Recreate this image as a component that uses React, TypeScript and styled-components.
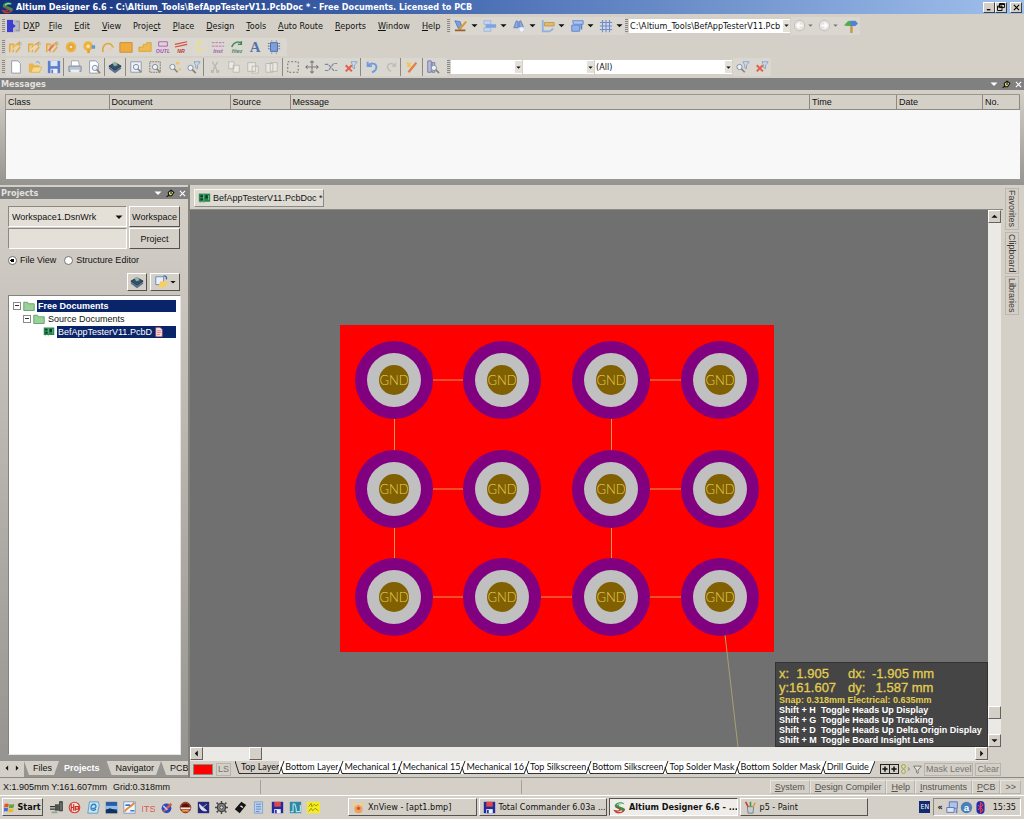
import React, { ReactNode } from 'react';
import styled, { createGlobalStyle } from 'styled-components';

const FACE = '#d4d0c8';
const UI = '"DejaVu Sans Condensed", "DejaVu Sans", sans-serif';
const SANS = '"Liberation Sans", Arial, sans-serif';
const NARROW = 'Lato, "Liberation Sans", sans-serif';

const Global = createGlobalStyle`
  * { box-sizing: border-box; }
  body { margin: 0; background: ${FACE}; color: #111; font: 9px/12px ${SANS}; }
  button, input, select { font: inherit; color: inherit; border-radius: 0; margin: 0; }
  a { color: inherit; text-decoration: none; }
  svg { display: block; flex: none; }
`;

/* ---------- icons (16 x 16 grid) ---------- */
const page = <path d="M3 1h7l3 3v11H3z" fill="#fff" stroke="#8a93b0" />;
const lens = (x: number, y: number) => (
  <g transform={`translate(${x} ${y})`}>
    <circle cx="4" cy="4" r="3" fill="#eaf2fa" stroke="#7f8894" />
    <path d="M6 6l4 4" stroke="#8c8478" strokeWidth="2" />
  </g>
);
const funnel = <path d="M8 2h7l-3 4v4l-2-1V6z" fill="#c8dcf4" stroke="#7890b4" strokeWidth=".8" />;
const redX = <path d="M2 6l7 7M9 6l-7 7" stroke="#e0614e" strokeWidth="2.4" />;
const bars = (c: string) => (
  <>
    <path d="M2 14V5h5M6 14V8l7-5v4M9 14l5-6" stroke="#e9a93c" strokeWidth="1.8" fill="none" />
    <path d="M4 12l6-6" stroke={c} strokeWidth="2" />
    <path d="M12 3h3v3" stroke="#a9b4c8" fill="none" />
  </>
);
const floppy = (a: string, b: string) => (
  <>
    <path d="M1 1h14v14H1z" fill={a} />
    <path d="M4 1h8v6H4z" fill={b} />
    <path d="M4 10h8v5H4z" fill="#eef" />
    <path d="M5 11h2v4H5z" fill={a} />
  </>
);
const tinyText = (top: ReactNode, t: string, c: string) => (
  <>
    {top}
    <text x="8" y="15" textAnchor="middle" fontSize="6" fontStyle="italic" fontWeight="700" fontFamily="Liberation Sans" fill={c}>{t}</text>
  </>
);
const board = (
  <>
    <path d="M1 2h14v10H1z" fill="#27864f" />
    <path d="M3 4h3v2H3zM3 8h4v2H3zM9 4h3v4H9z" fill="#0c3b2c" />
    <path d="M2 13h2M6 13h2M13 4v6M7 3v8" stroke="#83c08d" />
  </>
);
const chip = (
  <>
    <path d="M8 3l7 4-7 5-7-5z" fill="#34506c" stroke="#1e2c3c" />
    <path d="M1 8v2l7 5 7-5V8l-7 4z" fill="#56718b" />
    <path d="M5 3l4-1 2 4-4 1z" fill="#8eb6a4" />
  </>
);
const altium = (
  <>
    <path d="M2 6C3 1 12 0 14 4c-4-1-7 0-7 2l7 3c1 2 0 3-1 4L3 8z" fill="#2f9a4b" />
    <path d="M14 10c-1 5-10 6-12 2 4 1 7 0 7-2L4 7" stroke="#c33b30" strokeWidth="1.6" fill="none" />
    <path d="M5 5c2-2 5-2 7-1" stroke="#fff" fill="none" />
  </>
);

const ICONS: Record<string, ReactNode> = {
  altium,
  board,
  chip,
  dxp: (<><path d="M0 1h7v14H0z" fill="#3d3fd0" /><path d="M7 1h8v14H7z" fill="#b9b9c4" /><path d="M5 4l5 4-5 4z" fill="#3d3fd0" /><path d="M10 3h4v10h-4" fill="none" stroke="#8d8d9c" /></>),
  ruler: (<><path d="M1 2l6 1 2 6-4 2z" fill="#7a9fe0" stroke="#4a68a8" strokeWidth=".8" /><path d="M6 12l8-9" stroke="#dd9a34" strokeWidth="2.4" /><path d="M1 13h12" stroke="#94622a" strokeWidth="2" /></>),
  align: (<><path d="M1 2h8v4H1zM1 10h8v4H1z" fill="#c3d6f4" stroke="#87a4d4" strokeWidth=".7" /><path d="M3 6h12v4H3z" fill="#7ea2e2" /></>),
  find: (<><path d="M2 10l3-8 2 1v7zM8 3l2-1 3 7H8z" fill="#8caae0" stroke="#5b7cc4" /><circle cx="11" cy="12" r="3" fill="#eff4fc" stroke="#c6cede" /></>),
  dim: (<><path d="M2 1v13h8" stroke="#8db0e0" strokeWidth="2" fill="none" /><path d="M4 4h11v4H4z" fill="#e2ba68" stroke="#a88442" strokeWidth=".7" /><path d="M10 14l4-3" stroke="#8db0e0" strokeWidth="2" /></>),
  room: (<><path d="M2 7h9v7H2z" fill="#8fb2ea" stroke="#5a82c8" /><path d="M3 2h12v4H4z" fill="#aac6f2" stroke="#5a82c8" /><path d="M13 6v6" stroke="#5a82c8" strokeWidth="2" /></>),
  grid: <path d="M4 1v14M8 1v14M12 1v14M1 4h14M1 8h14M1 12h14" stroke="#6a8dd2" strokeWidth="1.2" />,
  navBack: (<><circle cx="8" cy="8" r="6.5" fill="#e6e4e0" stroke="#bab7b1" /><path d="M12 8H5M8 5L5 8l3 3" stroke="#fff" strokeWidth="2" fill="none" /></>),
  navNext: (<><circle cx="8" cy="8" r="6.5" fill="#e6e4e0" stroke="#bab7b1" /><path d="M4 8h7M8 5l3 3-3 3" stroke="#fff" strokeWidth="2" fill="none" /></>),
  home: (<><path d="M7 6h3v10H7z" fill="#c79b55" /><path d="M0 7l5-5 4 1v5H3z" fill="#58aa4e" /><path d="M7 2h6l3 3-3 3H8z" fill="#4c86d0" /></>),
  route1: bars('#f7cf74'),
  route2: bars('#f2dca0'),
  route3: bars('#e0705c'),
  pad: (<><circle cx="8" cy="8" r="6" fill="#f0b23e" /><circle cx="8" cy="8" r="2.4" fill="#fbe6b4" stroke="#c8862a" /></>),
  via: (<><circle cx="7" cy="7" r="5.5" fill="#f0b23e" /><circle cx="7" cy="7" r="2" fill="#fae3ac" /><path d="M6 11h3v4H6z" fill="#e0a030" /><path d="M11 6h4v4h-4z" fill="#5b9bd8" /></>),
  arc: (<><path d="M2 14C1 4 11 0 14 9" stroke="#e3a63c" strokeWidth="1.8" fill="none" /><path d="M9 12l4-4" stroke="#f2cf8c" strokeWidth="2" /></>),
  fill: <path d="M1 3h14v11H1z" fill="#f0ab3c" stroke="#c58a3a" />,
  region: <path d="M1 13V8h5V5h4V3h5v10z" fill="#eebb50" stroke="#d8a23a" />,
  outl: tinyText(<path d="M3 2h10v5H3z" fill="none" stroke="#b54fc0" />, 'OUTL', '#a54fc0'),
  nr: tinyText(<path d="M1 5l14-3M1 8l14-3" stroke="#d84a42" strokeWidth="1.4" />, 'NR', '#b83a30'),
  coord: <path d="M12 4C8 0 3 4 4 8s5 6 9 3" stroke="#ecdf88" strokeWidth="2" fill="none" />,
  inst: tinyText(<path d="M1 3h14M1 7h14" stroke="#bc6ab4" strokeDasharray="3 1" />, 'Inst', '#a35aa8'),
  wiz: tinyText(<path d="M2 8c2-6 8-7 11-4M13 1v4H9" stroke="#3f8c58" strokeWidth="1.6" fill="none" />, 'fitez', '#4c8468'),
  text: <text x="8" y="14" textAnchor="middle" fontSize="17" fontWeight="700" fontFamily="Liberation Serif" fill="#5573ac">A</text>,
  component: (<><path d="M4 3h8v10H4z" fill="#7e9fd8" stroke="#4466a8" /><path d="M1 4h2M1 7h2M1 10h2M13 4h2M13 7h2M13 10h2M5 1h1M10 1h1M5 15h1M10 15h1" stroke="#6b7ba0" strokeWidth="1.4" /></>),
  fresh: page,
  open: (<><path d="M1 14V4h5l1 2h6v8z" fill="#e8b64c" /><path d="M3 14l3-6h10l-3 6z" fill="#fbd986" stroke="#d0a03c" strokeWidth=".6" /><path d="M9 3c2-2 4-1 4 1" stroke="#6b8cc4" fill="none" /></>),
  save: floppy('#5d7ec8', '#d8e4f8'),
  print: (<><path d="M4 1h8l1 6H4z" fill="#fff" stroke="#8c98a8" strokeWidth=".8" /><path d="M1 7h14v6H1z" fill="#b8c2d0" stroke="#6e7a8c" strokeWidth=".8" /><path d="M3 11h10v3H3z" fill="#e9eef5" /></>),
  preview: (<>{page}{lens(5, 5)}</>),
  zoomDoc: (<><path d="M2 2h12v12H2z" fill="#e8eff8" stroke="#8a93a8" />{lens(4, 4)}</>),
  zoomSel: (<><path d="M2 2h12v12H2z" fill="none" stroke="#70706c" strokeDasharray="2 1" />{lens(4, 4)}</>),
  zoomPick: (<>{lens(1, 4)}<path d="M9 2h4v3H9zM12 9h3v3h-3z" fill="#edc46c" /></>),
  zoomFilter: (<>{lens(0, 5)}{funnel}</>),
  cut: <path d="M5 2l5 9M11 2L6 11M4 12h2v2H4zM10 12h2v2h-2z" stroke="#b8b5ae" strokeWidth="1.4" fill="none" />,
  copy: <path d="M2 2h6v8H2zM7 6h7v8H7z" fill="#eceae5" stroke="#b8b5ae" />,
  paste: <path d="M2 3h9v10H2zM7 7h7v8H7z" fill="#e9e7e2" stroke="#b8b5ae" />,
  stamp: <path d="M1 4h8v10H1zM6 3h8v10H6z" fill="#e9e7e2" stroke="#b8b5ae" />,
  select: <path d="M2 2h12v12H2z" fill="none" stroke="#62625e" strokeDasharray="2 2" />,
  move: <path d="M8 1v14M1 8h14M6 3l2-2 2 2M6 13l2 2 2-2M3 6L1 8l2 2M13 6l2 2-2 2" stroke="#7a7a7c" fill="none" strokeWidth="1.2" />,
  deselect: <path d="M1 5h4l6 7h4M1 12h4l6-8h4" stroke="#7e889c" fill="none" strokeWidth="1.4" strokeDasharray="4 1" />,
  clear: (<>{redX}{funnel}</>),
  undo: <path d="M3 2v5h5M3 7c4-5 10-3 10 1 0 3-2 5-5 6" stroke="#6f9be0" strokeWidth="2.2" fill="none" />,
  redo: <path d="M13 3v4H9M13 7C9 2 4 4 4 8c0 3 2 4 4 5" stroke="#bfbcb6" strokeWidth="1.6" fill="none" />,
  wand: (<><path d="M4 14l9-11" stroke="#e47c44" strokeWidth="2.6" /><path d="M2 3l5 5M3 8l3-5" stroke="#f0c848" strokeWidth="2" /></>),
  browse: (<><path d="M2 1h4v13H2zM7 3h3v11H7z" fill="#b7bce2" stroke="#70769c" />{lens(5, 5)}</>),
  zoomF: (<>{lens(0, 4)}{funnel}</>),
  folderBtn: (<><path d="M2 2h9v9H2z" fill="#e8f0fc" stroke="#5c80b8" /><path d="M5 14l2-7h9l-3 7z" fill="#f6cf62" /><path d="M11 1c3 0 4 2 3 4" stroke="#3e68b0" strokeWidth="1.6" fill="none" /></>),
  folder: <path d="M1 14V3h5l1 2h8v9z" fill="#9cd09a" stroke="#4e9058" />,
  docRed: (<><path d="M3 1h7l3 3v11H3z" fill="#fbdede" stroke="#d87878" /><path d="M5 6h6M5 9h6M5 12h4" stroke="#d04848" /></>),
  windows: (<><path d="M1 3c2-1 4-1 6 0L6 8C4 7 3 7 0 8z" fill="#e5532c" /><path d="M8 3c2 1 4 1 7 0l-1 5c-3 1-5 1-7 0z" fill="#58a83c" /><path d="M0 9c2-1 4-1 6 0l-1 5c-2-1-3-1-5 0z" fill="#3c6fd8" /><path d="M7 9c2 1 4 1 7 0l-1 5c-3 1-5 1-7 0z" fill="#f0b828" /></>),
  plug: (<><path d="M6 4h5v8H6z" fill="#4b5350" /><path d="M0 7h6M0 10h6M12 1h3v11h-3z" stroke="#2e3432" strokeWidth="1.4" fill="#888" /><path d="M2 14h7" stroke="#88a090" strokeWidth="2" /></>),
  hp: (<><circle cx="8" cy="8" r="6.5" fill="#f3dcd4" stroke="#cf4436" strokeWidth="1.4" /><path d="M4 4v8M7 4v8M4 8h3M9 12V7h4v3H9" stroke="#cf2c24" fill="none" strokeWidth="1.4" /></>),
  mail: (<><path d="M3 1h11l1 4-2 10H1z" fill="#c6e4f4" stroke="#4a94c4" /><path d="M11 10c-4 3-7 1-6-3s6-4 6 0c0 2-3 2-5 2" fill="none" stroke="#3180bc" strokeWidth="1.6" /></>),
  sea: (<><path d="M1 1h14v14H1z" fill="#2c5ca8" /><path d="M1 6h14v4H1z" fill="#8cc0e8" /><path d="M1 11l5-2 9 3v3H1z" fill="#14305c" /></>),
  orbit: (<><path d="M1 1h14v14H1z" fill="#f4f6fa" stroke="#6a90c8" /><path d="M2 13C4 8 9 9 14 2" stroke="#e88c2c" strokeWidth="2.4" fill="none" /><path d="M3 5h6M9 12h5" stroke="#3d78c8" strokeWidth="2" /></>),
  its: <text x="8" y="13" textAnchor="middle" fontSize="12" fontFamily="Liberation Sans" fill="#d85c50">ITS</text>,
  rocket: (<><circle cx="8" cy="9" r="6" fill="#2c48c0" /><path d="M3 13L13 2l2 3-9 8z" fill="#e05c38" /><path d="M4 6l5 5" stroke="#a8ccf4" strokeWidth="2" /></>),
  dome: (<><circle cx="8" cy="8" r="6.5" fill="#b8402c" stroke="#7c2418" /><path d="M3 8a5 5 0 0110 0z" fill="#4c1810" /><path d="M2 9h12" stroke="#f6ecd8" strokeWidth="2" /><path d="M4 12h8" stroke="#e8a040" strokeWidth="2" /></>),
  dish: (<><path d="M1 1h14v14H1z" fill="#25297c" /><path d="M3 4c0 6 4 9 9 8zM7 8l5-4" fill="#dce0e8" stroke="#dce0e8" /></>),
  gear: (<><circle cx="8" cy="8" r="5" fill="#888" stroke="#3c3c3c" strokeWidth="1.6" /><circle cx="8" cy="8" r="2" fill="#ddd" stroke="#333" /><path d="M8 0v3M8 13v3M0 8h3M13 8h3M2 2l2 2M12 12l2 2M14 2l-2 2M2 14l2-2" stroke="#444" strokeWidth="1.8" /></>),
  tag: (<><path d="M1 10L9 1l6 4-8 10z" fill="#141414" /><path d="M8 6l3 2" stroke="#eee" strokeWidth="1.6" /></>),
  notes: (<><path d="M3 1h10v14H3z" fill="#b8cff0" stroke="#7e9ccc" /><path d="M5 4h6M5 7h6M5 10h6M5 13h4" stroke="#587cb8" /></>),
  tc: floppy('#202c9c', '#e04848'),
  wave: (<><path d="M1 1h14v14H1z" fill="#2c88a4" /><path d="M2 13h3V4c3-3 4 6 4 9h5V5" stroke="#b4e4ec" fill="none" strokeWidth="1.4" /></>),
  paper: (<><path d="M0 1h16v14H0z" fill="#f4ec20" /><path d="M2 7l3-4 1 4 3-3 2 2 3-2M2 13l3-4 2 3 3-3 4 3" stroke="#8c7c10" fill="none" /></>),
  xn: (<><circle cx="8" cy="10" r="5" fill="#eca258" /><circle cx="3" cy="4" r="2.6" fill="#f4cc90" /><circle cx="12" cy="4" r="2.6" fill="#f4cc90" /><circle cx="8" cy="9" r="2" fill="#d84c30" /></>),
  paint: (<><path d="M4 7h8l-1 8H5z" fill="#c8ccd0" stroke="#707478" /><path d="M5 7L2 1" stroke="#cf3c30" strokeWidth="2" /><path d="M8 7V1" stroke="#4a9a44" strokeWidth="2" /><path d="M11 7l3-5" stroke="#e0a030" strokeWidth="2" /></>),
  net: (<><path d="M4 1h10v8H4z" fill="#a8c4f0" stroke="#5068a8" /><path d="M1 8h9v6H1z" fill="#d8e4f8" stroke="#5068a8" /><path d="M13 10v5" stroke="#7084b4" strokeWidth="2" /></>),
  avast: (<><circle cx="8" cy="8" r="7" fill="#4a80b8" /><text x="8" y="12" textAnchor="middle" fontSize="12" fontWeight="700" fontFamily="Liberation Sans" fill="#fff">a</text></>),
  bluetooth: (<><rect x="3" y="0" width="10" height="16" rx="5" fill="#1c2cb4" /><path d="M5 5l6 6-3 3V2l3 3-6 6" stroke="#e03848" strokeWidth="1.4" fill="none" /></>),
  pin: (<><path d="M4 6l5-4 5 4-4 6H5z" fill="#e8e070" stroke="#111" strokeWidth="1.8" /><path d="M1 14l5-4M9 2v7" stroke="#111" strokeWidth="2" /></>),
  down: <path d="M1 5h14l-7 7z" fill="currentColor" />,
  left: <path d="M11 1v14L4 8z" fill="currentColor" />,
  right: <path d="M5 1v14l7-7z" fill="currentColor" />,
  up: <path d="M1 11h14L8 4z" fill="currentColor" />,
  close: <path d="M2 2l12 12M14 2L2 14" stroke="currentColor" strokeWidth="2.6" />,
  min: <path d="M2 13h8" stroke="currentColor" strokeWidth="3" />,
  restore: <path d="M5 1h10v8H5zM5 3h10M1 6h9v9H1zM1 8h9" stroke="currentColor" strokeWidth="1.8" fill={FACE} />,
  dots: (<><circle cx="4" cy="4" r="3" fill="#e8e48c" stroke="#7c7c40" /><circle cx="4" cy="12" r="3" fill="#e8e48c" stroke="#7c7c40" /><path d="M11 4v8l4-4z" fill="#a5a199" /></>),
  filter: <path d="M1 2h14L9 9v6l-3-2V9z" fill="#e4e8e4" stroke="#606860" strokeWidth="1.4" />,
  plus: <path d="M8 1v14M1 8h14" stroke="currentColor" strokeWidth="4" />,
};

const Icon = ({ name, size = 14 }: { name: string; size?: number }) => (
  <svg width={size} height={size} viewBox="0 0 16 16" aria-hidden="true">{ICONS[name]}</svg>
);

/* ---------- window frame ---------- */
const Window = styled.div`
  min-height: 100vh;
  display: flex;
  flex-direction: column;
  background: ${FACE};
`;
const TitleBar = styled.header`
  height: 14px;
  display: flex;
  align-items: center;
  gap: 2px;
  padding: 0 2px 0 1px;
  background: linear-gradient(90deg, #14307a, #4166ae 40%, #a0c0ec);
  color: #fff;
  font: bold 9px/13px ${UI};
  h1 { flex: 1; min-width: 0; margin: 0; font: inherit; white-space: nowrap; overflow: hidden; }
`;
const CaptionButton = styled.button<{ $apart?: boolean }>`
  width: 12px;
  height: 11px;
  padding: 0;
  margin-left: ${p => (p.$apart ? 1 : -2)}px;
  display: grid;
  place-items: center;
  background: ${FACE};
  color: #000;
  border: 1px solid;
  border-color: #fff #404040 #404040 #fff;
`;
const Bar = styled.div<{ $h: number }>`
  height: ${p => p.$h}px;
  display: flex;
  align-items: center;
  padding-left: 2px;
  font-family: ${UI};
`;
const Grip = styled.span`
  width: 3px;
  height: 14px;
  margin-right: 1px;
  flex: none;
  background: repeating-linear-gradient(#8c8982 0 1px, transparent 1px 2px);
`;
const Menu = styled.nav`
  display: flex;
  align-items: center;
  width: 441px;
`;
const MenuItem = styled.button`
  padding: 0 6px;
  border: 0;
  background: none;
  line-height: 16px;
  white-space: nowrap;
`;
const DxpItem = styled(MenuItem)`
  display: flex;
  align-items: center;
  gap: 2px;
  padding: 0 3px 0 1px;
`;
const Key = styled.span`
  text-decoration: underline;
`;
const ToolStrip = styled.div<{ $w?: number }>`
  display: flex;
  align-items: center;
  justify-content: space-between;
  width: ${p => (p.$w ? `${p.$w}px` : 'auto')};
  height: 18px;
  padding-right: ${p => (p.$w ? 4 : 0)}px;
  background: #dad7d0;
`;
const Tool = styled.button`
  width: 19px;
  min-width: 0;
  flex: 0 1 19px;
  height: 18px;
  padding: 0;
  border: 0;
  background: none;
  display: grid;
  place-items: center;
`;
const DropTool = styled(Tool)`
  width: 29px;
  flex-basis: 29px;
  grid-template-columns: 20px 6px;
`;
const NavTool = styled(DropTool)`
  width: 25px;
  flex-basis: 25px;
  color: #77746e;
  grid-template-columns: 16px 6px;
`;
const Divider = styled.span`
  width: 2px;
  height: 18px;
  flex: none;
  border-left: 1px solid #8c8982;
`;
const Combo = styled.span<{ $w?: number; $tone?: string }>`
  display: flex;
  align-items: center;
  width: ${p => (p.$w ? `${p.$w}px` : 'auto')};
  height: 14px;
  margin-right: 1px;
  background: ${p => p.$tone ?? '#fff'};
  select {
    flex: 1;
    min-width: 0;
    height: 14px;
    padding: 0 1px;
    border: 0;
    appearance: none;
    background: transparent;
    text-overflow: clip;
  }
`;
const Arrow = styled.span`
  width: 7px;
  height: 12px;
  display: grid;
  place-items: center;
  background: #e4e1db;
`;

/* ---------- docked panels ---------- */
const PanelTitle = styled.div`
  height: 12px;
  display: flex;
  align-items: center;
  gap: 4px;
  padding: 0 2px;
  background: #808080;
  color: #e4e1dc;
  font: bold 9px/12px ${UI};
  h2 { flex: 1; margin: 0; margin-left: -1px; font: inherit; }
`;
const PanelButton = styled.button`
  padding: 0;
  border: 0;
  background: none;
  color: #fff;
`;
const MessagesBody = styled.div`
  height: 95px;
  padding: 4px 4px 6px 5px;
  background: linear-gradient(${FACE}, #969490);
`;
const MessagesList = styled.div`
  height: 85px;
  background: #f8f8f8;
  border-top: 1px solid #9a978f;
  border-left: 1px solid #9a978f;
`;
const MessagesTable = styled.table`
  width: 100%;
  table-layout: fixed;
  border-collapse: collapse;
  th {
    height: 14px;
    padding: 0 2px;
    text-align: left;
    font-weight: 400;
    line-height: 12px;
    background: ${FACE};
    border-right: 1px solid #8c8982;
    border-bottom: 1px solid #8c8982;
  }
`;
const Col = styled.col<{ $w?: number }>`
  width: ${p => (p.$w ? `${p.$w}px` : 'auto')};
`;
const Workspace = styled.main`
  flex: 1;
  display: flex;
  min-height: 420px;
  border-bottom: 1px solid #8c8982;
`;
const Projects = styled.aside`
  width: 190px;
  flex: none;
  display: flex;
  flex-direction: column;
  padding-top: 2px;
  border-right: 2px solid #85827b;
`;
const ProjectsBody = styled.div`
  flex: 1;
  display: flex;
  flex-direction: column;
  padding: 7px 8px 6px;
  background: linear-gradient(${FACE}, #969490);
`;
const FieldRow = styled.div`
  display: grid;
  grid-template-columns: 1fr 51px;
  gap: 2px;
  height: 21px;
  margin-bottom: 1px;
`;
const BoxedCombo = styled(Combo)`
  height: 21px;
  margin: 0;
  border: 1px solid #8c8982;
  border-right-color: #fff;
  border-bottom-color: #fff;
  ${Arrow} { width: 14px; background: none; }
  select { padding-left: 3px; }
`;
const TextField = styled.input`
  min-width: 0;
  border: 1px solid;
  border-color: #8c8982 #fff #fff #8c8982;
  background: #e4e0d8;
`;
const PushButton = styled.button<{ $w?: number }>`
  width: ${p => (p.$w ? `${p.$w}px` : 'auto')};
  padding: 0;
  display: flex;
  align-items: center;
  justify-content: center;
  gap: 2px;
  background: ${FACE};
  border: 1px solid;
  border-color: #fff #55524d #55524d #fff;
  white-space: nowrap;
`;
const Radios = styled.div`
  display: flex;
  gap: 8px;
  height: 20px;
  align-items: center;
  label { display: flex; align-items: center; gap: 3px; }
  input {
    appearance: none;
    width: 9px;
    height: 9px;
    border-radius: 50%;
    border: 1px solid #77746e;
    background: #fff;
  }
  input:checked { background: radial-gradient(#000 0 1px, #111 2px, #fff 2px); }
`;
const Actions = styled.div`
  display: flex;
  justify-content: flex-end;
  gap: 3px;
  height: 18px;
  margin: 3px 0 4px;
`;
const Tree = styled.ul`
  flex: 1;
  list-style: none;
  margin: 0 -1px 0 0;
  padding: 3px 4px 0 4px;
  background: #fff;
  border: 1px solid;
  border-color: #85827b #e8e5de #e8e5de #85827b;
`;
const TreeRow = styled.li<{ $level: number }>`
  display: flex;
  align-items: center;
  height: 13px;
  padding-left: ${p => p.$level * 10}px;
  gap: 2px;
`;
const TreeLabel = styled.span<{ $on?: boolean; $bold?: boolean }>`
  flex: 1;
  display: flex;
  align-items: center;
  gap: 2px;
  height: 12px;
  padding-left: 1px;
  white-space: nowrap;
  overflow: hidden;
  background: ${p => (p.$on ? '#0a246a' : 'transparent')};
  color: ${p => (p.$on ? '#fff' : '#111')};
  font-weight: ${p => (p.$bold ? 700 : 400)};
`;
const Expander = styled.button`
  width: 8px;
  height: 8px;
  padding: 0;
  border: 1px solid #8a8a8a;
  background: linear-gradient(#333, #333) center / 4px 1px no-repeat #fff;
`;
const PanelTabs = styled.nav`
  height: 16px;
  display: flex;
  align-items: flex-start;
  overflow: hidden;
  background: #969490;
`;
const PanelArrows = styled.span`
  display: flex;
  gap: 4px;
  height: 16px;
  padding: 4px 4px;
  background: ${FACE};
`;
const PanelTab = styled.button<{ $on?: boolean }>`
  flex: none;
  height: 14px;
  padding: 0 7px 0 ${p => (p.$on ? 5 : 9)}px;
  border: 0;
  background: ${p => (p.$on ? 'transparent' : FACE)};
  color: ${p => (p.$on ? '#fff' : '#111')};
  font-weight: ${p => (p.$on ? 700 : 400)};
  clip-path: ${p => (p.$on ? 'none' : 'polygon(0 0, 100% 0, calc(100% - 5px) 100%, 5px 100%)')};
  &:last-child { padding-right: 1px; clip-path: polygon(0 0, 100% 0, 100% 100%, 5px 100%); }
`;

/* ---------- document area ---------- */
const Documents = styled.section`
  flex: 1;
  min-width: 0;
  display: flex;
  flex-direction: column;
`;
const DocTabs = styled.div`
  height: 25px;
  display: flex;
  align-items: flex-end;
  padding: 0 0 2px 4px;
  border-bottom: 1px solid #8c8982;
`;
const DocTab = styled.button`
  height: 18px;
  display: flex;
  align-items: center;
  gap: 2px;
  padding: 0 1px 0 3px;
  background: #dedbd4;
  border: 1px solid;
  border-color: #f8f6f2 #8c8982 #8c8982 #f8f6f2;
  white-space: nowrap;
`;
const CanvasRow = styled.div`
  flex: 1;
  display: flex;
  min-height: 0;
`;
const Canvas = styled.div`
  flex: 1;
  min-width: 0;
  position: relative;
  overflow: hidden;
  background: #707070;
  > svg { width: 100%; height: 100%; }
`;
const Hud = styled.div`
  position: absolute;
  right: 0;
  bottom: 0;
  width: 213px;
  padding: 4px 3px 1px;
  background: #454545;
  border: 1px solid #333;
  color: #fff;
  font: bold 9px/10px ${SANS};
  p { margin: 0; white-space: pre; }
`;
const Readout = styled.div`
  display: grid;
  grid-template-columns: 69px 24px 1fr;
  color: #e2cd50;
  font: 13px/14px ${SANS};
  -webkit-text-stroke: 0.3px #e2cd50;
  white-space: pre;
`;
const Snap = styled.p`
  color: #e2cd50;
`;
const Shortcut = styled.p`
  display: grid;
  grid-template-columns: 42px 1fr;
`;
const Track = styled.div<{ $vertical?: boolean }>`
  display: flex;
  flex: none;
  flex-direction: ${p => (p.$vertical ? 'column' : 'row')};
  ${p => (p.$vertical ? 'width: 13px; margin-right: 2px;' : 'height: 14px; margin-right: 15px;')}
  background: #ebe9e5;
`;
const TrackButton = styled.button`
  width: 13px;
  height: 13px;
  flex: none;
  padding: 0;
  display: grid;
  place-items: center;
  background: ${FACE};
  border: 1px solid;
  border-color: #fff #66635d #66635d #fff;
`;
const TrackSpace = styled.span<{ $grow: number }>`
  flex: ${p => p.$grow} 1 0;
`;
const LayerBar = styled.div`
  height: 16px;
  display: flex;
  align-items: center;
  overflow: hidden;
`;
const Swatch = styled.span`
  width: 20px;
  height: 11px;
  margin: 0 3px;
  flex: none;
  background: #f00;
  border: 1px solid #8c8982;
`;
const FlatButton = styled.button`
  height: 13px;
  padding: 0 1px;
  flex: none;
  border: 1px solid #b8b4ac;
  background: none;
  color: #77746e;
  line-height: 11px;
  white-space: nowrap;
`;
const LayerTabs = styled.nav`
  display: flex;
  align-self: stretch;
  margin-left: 4px;
  font: 9px/13px ${NARROW};
`;
const LayerTab = styled.button<{ $on?: boolean }>`
  height: 13px;
  padding: 0;
  border: 0;
  border-bottom: 1px solid #333;
  background: ${p => (p.$on ? FACE : '#fff')};
  line-height: 12px;
  white-space: nowrap;
`;
const LayerTools = styled.div`
  display: flex;
  align-items: center;
  gap: 2px;
  margin-left: auto;
  padding-right: 2px;
`;
const StepButtons = styled.span`
  display: flex;
  border: 1px solid #222;
  button { width: 8px; height: 8px; padding: 1px; border: 0; background: ${FACE}; }
  button + button { width: 9px; border-left: 1px solid #222; }
`;
const SideTabs = styled.nav`
  width: 21px;
  flex: none;
  display: flex;
  flex-direction: column;
  align-items: flex-start;
  gap: 2px;
  padding: 3px 0 0 2px;
`;
const SideTab = styled.button<{ $h: number }>`
  width: 14px;
  height: ${p => p.$h}px;
  padding: 1px 0;
  writing-mode: vertical-rl;
  text-align: left;
  line-height: 12px;
  border: 1px solid #bcb8b0;
  background: none;
  color: #3c3a36;
`;

/* ---------- status and task bar ---------- */
const Status = styled.footer`
  height: 17px;
  display: flex;
  align-items: center;
  padding: 0 3px;
`;
const StatusCell = styled.span<{ $w: number }>`
  width: ${p => p.$w}px;
  display: flex;
  gap: 6px;
  line-height: 14px;
  height: 14px;
  border-right: 1px solid #a5a199;
`;
const StatusButtons = styled.span`
  display: flex;
  margin-left: auto;
`;
const StatusButton = styled.button`
  height: 14px;
  padding: 0 4px;
  border: 1px solid;
  border-color: #e8e5df #b8b4ac #b8b4ac #e8e5df;
  background: none;
  color: #55524d;
  line-height: 12px;
`;
const TaskBar = styled.footer`
  height: 24px;
  display: flex;
  align-items: flex-start;
  padding: 2px 3px 0 2px;
  border-top: 1px solid #fff;
  font: 9px/12px ${UI};
`;
const StartButton = styled(PushButton)`
  width: 41px;
  height: 18px;
  font-weight: 700;
`;
const QuickLaunch = styled.div`
  display: flex;
  width: 276px;
  margin: 0 25px 0 4px;
`;
const Tasks = styled.div`
  display: flex;
  gap: 2px;
  flex: 0 1 520px;
  min-width: 0;
`;
const Task = styled.button<{ $on?: boolean }>`
  flex: 1 1 0;
  min-width: 0;
  height: 18px;
  display: flex;
  align-items: center;
  gap: 3px;
  padding: 0 3px;
  white-space: nowrap;
  overflow: hidden;
  border: 1px solid;
  border-color: ${p => (p.$on ? '#55524d #fff #fff #55524d' : '#fff #55524d #55524d #fff')};
  background: ${p => (p.$on ? '#efede9' : FACE)};
  font-weight: ${p => (p.$on ? 700 : 400)};
`;
const Language = styled.span`
  margin: 3px 3px 0 auto;
  width: 11px;
  background: #122a70;
  color: #fff;
  font: 7px/12px ${UI};
  text-align: center;
`;
const Tray = styled.div`
  height: 18px;
  display: flex;
  align-items: center;
  gap: 1px;
  padding: 0 4px 0 3px;
  border: 1px solid;
  border-color: #8c8982 #fff #fff #8c8982;
  b { padding-right: 2px; }
  time { padding-left: 5px; }
`;

/* ---------- data ---------- */
const MENUS = ['_File', '_Edit', '_View', 'Proje_ct', '_Place', '_Design', '_Tools', '_Auto Route', '_Reports', '_Window', '_Help'];
const DRAW_TOOLS = ['route1', 'route2', 'route3', 'pad', 'via', 'arc', 'fill', 'region', 'outl', 'nr', 'coord', 'inst', 'wiz', 'text', 'component'];
const MAIN_TOOLS = [
  ['fresh', 'open', 'save'], ['print', 'preview'], ['chip'],
  ['zoomDoc', 'zoomSel', 'zoomPick', 'zoomFilter'], ['cut', 'copy', 'paste', 'stamp'],
  ['select', 'move', 'deselect', 'clear'], ['undo', 'redo'], ['wand'], ['browse'],
];
const DROP_TOOLS = ['ruler', 'align', 'find', 'dim', 'room', 'grid'];
const LAYERS = ['Top Layer', 'Bottom Layer', 'Mechanical 1', 'Mechanical 15', 'Mechanical 16', 'Top Silkscreen', 'Bottom Silkscreen', 'Top Solder Mask', 'Bottom Solder Mask', 'Drill Guide'];
const SHORTCUTS = [['H', 'Toggle Heads Up Display'], ['G', 'Toggle Heads Up Tracking'], ['D', 'Toggle Heads Up Delta Origin Display'], ['M', 'Toggle Board Insight Lens']];
const QUICK = ['plug', 'hp', 'mail', 'sea', 'orbit', 'its', 'rocket', 'dome', 'dish', 'gear', 'tag', 'notes', 'tc', 'wave', 'paper'];
const COLUMNS: [string, number?][] = [['Class', 103], ['Document', 121], ['Source', 60], ['Message'], ['Time', 87], ['Date', 86], ['No.', 37]];
const PAD_X = [204, 312, 421, 530];
const PAD_Y = [170, 279, 387];

const keyed = (label: string) => {
  const i = label.indexOf('_');
  return i < 0 ? label : <span>{label.slice(0, i)}<Key>{label[i + 1]}</Key>{label.slice(i + 2)}</span>;
};

const PanelControls = () => (
  <>
    <PanelButton aria-label="Menu"><Icon name="down" size={8} /></PanelButton>
    <PanelButton aria-label="Pin"><Icon name="pin" size={9} /></PanelButton>
    <PanelButton aria-label="Close"><Icon name="close" size={7} /></PanelButton>
  </>
);

const ToolCombo = ({ label, value, w }: { label: string; value: string; w: number }) => (
  <Combo $w={w}>
    <select aria-label={label}><option>{value}</option></select>
    <Arrow><Icon name="down" size={5} /></Arrow>
  </Combo>
);

const Slash = ({ first, last }: { first?: boolean; last?: boolean }) => (
  <svg width="6" height="13" viewBox="0 0 6 13" aria-hidden="true">
    <path d={last ? 'M0 0h6L1 13H0z' : 'M0 0h6v13H0z'} fill={first ? FACE : '#fff'} />
    <path d={first ? 'M0 0l4 12.5h2' : last ? 'M0 12.5h1L6 0' : 'M0 13L5 0M2 6l2 6.5h2'} stroke="#222" fill="none" />
  </svg>
);

const BoardDrawing = () => (
  <svg viewBox="0 0 798 537">
    <path d="M150 115h434v327H150z" fill="#f00" />
    <g stroke="#dd9a50" strokeWidth="1">
      {PAD_Y.map(y => <path key={y} d={`M204 ${y}H312M421 ${y}H530`} />)}
      <path d="M312 387H421M204.5 170V387M421.5 170V387" />
    </g>
    <path d="M535 425L548 537" stroke="#a8a070" strokeWidth="1" />
    {PAD_Y.map(y => PAD_X.map(x => (
      <g key={`${x}-${y}`} transform={`translate(${x} ${y})`}>
        <circle r="39" fill="#800080" />
        <circle r="27" fill="#c0c0c0" />
        <circle r="15" fill="#806000" />
        <text x="0" y="5" textAnchor="middle" fontFamily="Lato, Liberation Sans, sans-serif" fontWeight="300" fontSize="13" fill="#e6cc5a">GND</text>
      </g>
    )))}
  </svg>
);

export default function App() {
  return (
    <Window>
      <Global />
      <TitleBar>
        <Icon name="altium" size={13} />
        <h1>Altium Designer 6.6 - C:\Altium_Tools\BefAppTesterV11.PcbDoc * - Free Documents. Licensed to PCB</h1>
        <CaptionButton aria-label="Minimize"><Icon name="min" size={7} /></CaptionButton>
        <CaptionButton aria-label="Restore"><Icon name="restore" size={8} /></CaptionButton>
        <CaptionButton aria-label="Close" $apart><Icon name="close" size={7} /></CaptionButton>
      </TitleBar>

      <Bar $h={23}>
        <Grip />
        <Menu>
          <DxpItem><Icon name="dxp" />{keyed('D_XP')}</DxpItem>
          {MENUS.map(m => <MenuItem key={m}>{keyed(m)}</MenuItem>)}
        </Menu>
        <Grip />
        <ToolStrip>
          {DROP_TOOLS.map(t => <DropTool key={t} aria-label={t}><Icon name={t} /><Icon name="down" size={7} /></DropTool>)}
        </ToolStrip>
        <Grip />
        <ToolCombo label="Document path" value="C:\Altium_Tools\BefAppTesterV11.Pcb" w={161} />
        <ToolStrip>
          <NavTool aria-label="Back"><Icon name="navBack" size={13} /><Icon name="down" size={5} /></NavTool>
          <NavTool aria-label="Forward"><Icon name="navNext" size={13} /><Icon name="down" size={5} /></NavTool>
          <Tool aria-label="Home"><Icon name="home" /></Tool>
        </ToolStrip>
      </Bar>
      <Bar $h={19}>
        <Grip />
        <ToolStrip $w={281}>
          {DRAW_TOOLS.map(t => <Tool key={t} aria-label={t}><Icon name={t} /></Tool>)}
        </ToolStrip>
      </Bar>
      <Bar $h={22}>
        <Grip />
        <ToolStrip $w={441}>
          {MAIN_TOOLS.map((group, i) => (
            <React.Fragment key={i}>
              {i > 0 && <Divider />}
              {group.map(t => <Tool key={t} aria-label={t}><Icon name={t} /></Tool>)}
            </React.Fragment>
          ))}
        </ToolStrip>
        <Grip />
        <ToolCombo label="Net" value="" w={71} />
        <ToolCombo label="Component" value="" w={71} />
        <ToolCombo label="Filter" value="(All)" w={137} />
        <ToolStrip>
          <Tool aria-label="Apply filter"><Icon name="zoomF" /></Tool>
          <Tool aria-label="Clear filter"><Icon name="clear" /></Tool>
        </ToolStrip>
      </Bar>

      <section>
        <PanelTitle><h2>Messages</h2><PanelControls /></PanelTitle>
        <MessagesBody>
          <MessagesList>
            <MessagesTable>
              <colgroup>{COLUMNS.map(([n, w]) => <Col key={n} $w={w} />)}</colgroup>
              <thead><tr>{COLUMNS.map(([n]) => <th key={n} scope="col">{n}</th>)}</tr></thead>
            </MessagesTable>
          </MessagesList>
        </MessagesBody>
      </section>

      <Workspace>
        <Projects>
          <PanelTitle><h2>Projects</h2><PanelControls /></PanelTitle>
          <ProjectsBody>
            <FieldRow>
              <BoxedCombo $tone="#e4e0d8">
                <select aria-label="Workspace file"><option>Workspace1.DsnWrk</option></select>
                <Arrow><Icon name="down" size={8} /></Arrow>
              </BoxedCombo>
              <PushButton>Workspace</PushButton>
            </FieldRow>
            <FieldRow>
              <TextField aria-label="Project file" />
              <PushButton>Project</PushButton>
            </FieldRow>
            <Radios>
              <label><input type="radio" name="view" defaultChecked />File View</label>
              <label><input type="radio" name="view" />Structure Editor</label>
            </Radios>
            <Actions>
              <PushButton $w={20} aria-label="Compile"><Icon name="chip" /></PushButton>
              <PushButton $w={30} aria-label="Options"><Icon name="folderBtn" /><Icon name="down" size={6} /></PushButton>
            </Actions>
            <Tree>
              <TreeRow $level={0}>
                <Expander aria-label="Collapse" /><Icon name="folder" size={12} />
                <TreeLabel $on $bold>Free Documents</TreeLabel>
              </TreeRow>
              <TreeRow $level={1}>
                <Expander aria-label="Collapse" /><Icon name="folder" size={12} />
                <TreeLabel>Source Documents</TreeLabel>
              </TreeRow>
              <TreeRow $level={3}>
                <Icon name="board" size={12} />
                <TreeLabel $on>BefAppTesterV11.PcbD <Icon name="docRed" size={10} /></TreeLabel>
              </TreeRow>
            </Tree>
          </ProjectsBody>
          <PanelTabs>
            <PanelArrows><Icon name="left" size={6} /><Icon name="right" size={6} /></PanelArrows>
            <PanelTab>Files</PanelTab>
            <PanelTab $on>Projects</PanelTab>
            <PanelTab>Navigator</PanelTab>
            <PanelTab>PCB</PanelTab>
          </PanelTabs>
        </Projects>

        <Documents>
          <DocTabs>
            <DocTab><Icon name="board" size={13} />BefAppTesterV11.PcbDoc *</DocTab>
          </DocTabs>
          <CanvasRow>
            <Canvas>
              <BoardDrawing />
              <Hud>
                <Readout><span>x:  1.905</span><span>dx:</span><span>-1.905 mm</span></Readout>
                <Readout><span>y:161.607</span><span>dy:</span><span> 1.587 mm</span></Readout>
                <Snap>Snap: 0.318mm Electrical: 0.635mm</Snap>
                {SHORTCUTS.map(([k, t]) => <Shortcut key={k}><span>Shift + {k}</span><span>{t}</span></Shortcut>)}
              </Hud>
            </Canvas>
            <Track $vertical>
              <TrackButton aria-label="Scroll up"><Icon name="up" size={7} /></TrackButton>
              <TrackSpace $grow={97} />
              <TrackButton aria-label="Vertical thumb" />
              <TrackSpace $grow={3} />
              <TrackButton aria-label="Scroll down"><Icon name="down" size={7} /></TrackButton>
            </Track>
          </CanvasRow>
          <Track>
            <TrackButton aria-label="Scroll left"><Icon name="left" size={7} /></TrackButton>
            <TrackSpace $grow={6} />
            <TrackButton aria-label="Horizontal thumb" />
            <TrackSpace $grow={94} />
            <TrackButton aria-label="Scroll right"><Icon name="right" size={7} /></TrackButton>
          </Track>
          <LayerBar>
            <Swatch />
            <FlatButton>LS</FlatButton>
            <LayerTabs>
              <Slash first />
              {LAYERS.map((l, i) => (
                <React.Fragment key={l}>
                  {i > 0 && <Slash />}
                  <LayerTab $on={i === 0}>{l}</LayerTab>
                </React.Fragment>
              ))}
              <Slash last />
            </LayerTabs>
            <LayerTools>
              <StepButtons>
                <button aria-label="Previous layer"><Icon name="plus" size={6} /></button>
                <button aria-label="Next layer"><Icon name="plus" size={6} /></button>
              </StepButtons>
              <Icon name="dots" size={10} />
              <Icon name="filter" size={9} />
              <FlatButton>Mask Level</FlatButton>
              <FlatButton>Clear</FlatButton>
            </LayerTools>
          </LayerBar>
        </Documents>

        <SideTabs>
          <SideTab $h={42}>Favorites</SideTab>
          <SideTab $h={42}>Clipboard</SideTab>
          <SideTab $h={39}>Libraries</SideTab>
        </SideTabs>
      </Workspace>

      <Status>
        <StatusCell $w={258}><span>X:1.905mm Y:161.607mm</span><span>Grid:0.318mm</span></StatusCell>
        <StatusCell $w={261} />
        <StatusButtons>
          {['_System', '_Design Compiler', '_Help', '_Instruments', '_PCB', '>>'].map(s => <StatusButton key={s}>{keyed(s)}</StatusButton>)}
        </StatusButtons>
      </Status>

      <TaskBar>
        <StartButton><Icon name="windows" size={11} />Start</StartButton>
        <QuickLaunch>{QUICK.map(q => <Tool key={q} aria-label={q}><Icon name={q} size={13} /></Tool>)}</QuickLaunch>
        <Tasks>
          <Task><Icon name="xn" size={13} />XnView - [apt1.bmp]</Task>
          <Task><Icon name="tc" size={13} />Total Commander 6.03a ...</Task>
          <Task $on><Icon name="altium" size={13} />Altium Designer 6.6 - ...</Task>
          <Task><Icon name="paint" size={13} />p5 - Paint</Task>
        </Tasks>
        <Language>EN</Language>
        <Tray>
          <b>«</b><Icon name="net" size={13} /><Icon name="avast" size={13} /><Icon name="bluetooth" size={13} />
          <time>15:35</time>
        </Tray>
      </TaskBar>
    </Window>
  );
}
